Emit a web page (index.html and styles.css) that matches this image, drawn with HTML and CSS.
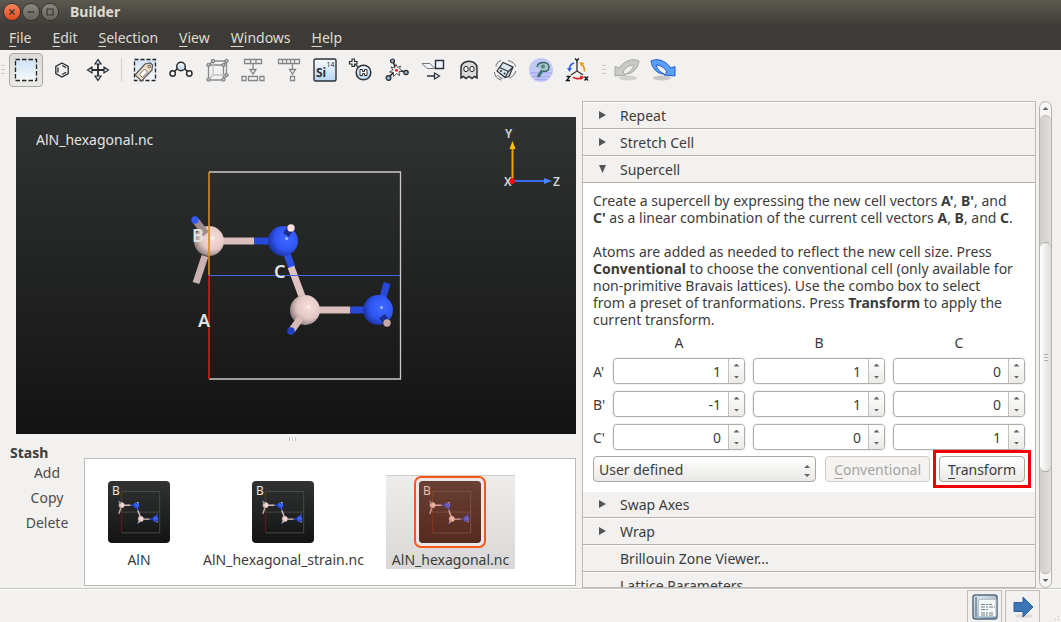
FILE: index.html
```html
<!DOCTYPE html>
<html lang="en">
<head>
    <meta charset="UTF-8">
    <meta name="viewport" content="width=device-width, initial-scale=1.0">
    <title>Builder</title>
    <link rel="stylesheet" href="styles.css">
</head>
<body>

<!-- shared drawings -->
<svg class="defs" width="0" height="0" aria-hidden="true">
    <defs>
        <radialGradient id="al" cx="0.62" cy="0.4" r="0.65">
            <stop offset="0" stop-color="#fff"/>
            <stop offset="0.12" stop-color="#f4d9d7"/>
            <stop offset="0.6" stop-color="#e2c8c6"/>
            <stop offset="1" stop-color="#8d7c7a"/>
        </radialGradient>
        <radialGradient id="n" cx="0.62" cy="0.42" r="0.65">
            <stop offset="0" stop-color="#e8eeff"/>
            <stop offset="0.1" stop-color="#3d66ff"/>
            <stop offset="0.6" stop-color="#2f55f2"/>
            <stop offset="1" stop-color="#1a2f99"/>
        </radialGradient>
        <linearGradient id="sky" x1="0" y1="0" x2="0" y2="1">
            <stop offset="0" stop-color="#cfe2f5"/>
            <stop offset="1" stop-color="#f6f9fc"/>
        </linearGradient>
        <linearGradient id="sky2" x1="0" y1="0" x2="0" y2="1">
            <stop offset="0" stop-color="#fafcfe"/>
            <stop offset="1" stop-color="#b5d3f1"/>
        </linearGradient>
        <g id="atoms" fill="none" stroke-width="7">
            <path d="M193 124H238" stroke="#dcbfbd"/>
            <path d="M238 124H256" stroke="#2848d8"/>
            <path d="M189 139L180 166" stroke="#cbb1af"/>
            <path d="M271 137L276 151" stroke="#2c4fe6"/>
            <path d="M275 150L287 182" stroke="#e0c4c2"/>
            <path d="M289 193H334" stroke="#dcbfbd"/>
            <path d="M334 193H350" stroke="#2848d8"/>
            <path d="M366 184L371 166" stroke="#2848d8"/>
            <circle cx="193" cy="124" r="15" fill="url(#al)" stroke="none"/>
            <path d="M190 117L180 104" stroke="#a08c8a"/>
            <circle cx="179" cy="103" r="3.7" fill="#3457f0" stroke="none"/>
            <circle cx="267" cy="124" r="15" fill="url(#n)" stroke="none"/>
            <circle cx="289" cy="193" r="15" fill="url(#al)" stroke="none"/>
            <circle cx="362" cy="193" r="15" fill="url(#n)" stroke="none"/>
            <path d="M270 118L274 112" stroke="#1c2f8f"/>
            <circle cx="275" cy="111" r="3.7" fill="#fbe0de" stroke="none"/>
            <path d="M286 199L276 213" stroke="#d6bab8"/>
            <circle cx="275" cy="214" r="3.7" fill="#2440c4" stroke="none"/>
            <path d="M366 199L370 205" stroke="#1c2f8f"/>
            <circle cx="371" cy="206" r="3.7" fill="#c4a8a6" stroke="none"/>
        </g>
        <g id="thumb">
            <g transform="translate(-25.1 -0.5) scale(0.2)">
                <path d="M193 55H384V262H193M193 158H384" fill="none" stroke="#464948" stroke-width="5"/>
                <path d="M193 158V262" stroke="#5a1c18" stroke-width="6"/>
                <path d="M193 55V158" stroke="#4d3d22" stroke-width="6"/>
                <use href="#atoms"/>
            </g>
            <text x="4" y="14" font-size="12" fill="#e6e6e6">B</text>
        </g>
    </defs>
</svg>

<header class="titlebar">
    <button class="win-button close" aria-label="Close"><svg viewBox="0 0 16 16"><path d="M5.5 5.5l5 5M10.5 5.5l-5 5"/></svg></button>
    <button class="win-button" aria-label="Minimize"><svg viewBox="0 0 16 16"><path d="M4.5 8h7"/></svg></button>
    <button class="win-button" aria-label="Maximize"><svg viewBox="0 0 16 16"><path d="M5 5h6v6H5z"/></svg></button>
    <h1>Builder</h1>
</header>

<nav class="menubar">
    <button><u>F</u>ile</button>
    <button><u>E</u>dit</button>
    <button><u>S</u>election</button>
    <button><u>V</u>iew</button>
    <button><u>W</u>indows</button>
    <button><u>H</u>elp</button>
</nav>

<div class="toolbar">
    <span class="handle"></span>
    <button class="tool pressed" aria-label="Select">
        <svg viewBox="0 0 24 24"><rect x="1.5" y="1.5" width="21" height="21" fill="url(#sky)" stroke="#222" stroke-width="1.3" stroke-dasharray="4.5 2"/></svg>
    </button>
    <button class="tool" aria-label="Molecule">
        <svg viewBox="0 0 24 24" fill="none" stroke="#2b2b2b" stroke-width="1.3"><path d="M12 5l6.2 3.5v7L12 19l-6.2-3.5v-7z"/><path d="M8 9.5v5M12.3 7.5l3.8 2.2M12.3 16.5l3.8-2.2"/></svg>
    </button>
    <button class="tool" aria-label="Move">
        <svg viewBox="0 0 24 24" fill="#cfe0f0" stroke="#2b2b2b" stroke-width="1.2"><path d="M12 5v14M5 12h14" stroke-width="1.8"/><path d="M12 1.5l3 4.5H9zM12 22.500l3-4.500H9zM1.500 12l4.500-3v6zM22.500 12l-4.500-3v6z"/></svg>
    </button>
    <span class="divider"></span>
    <button class="tool" aria-label="Tags">
        <svg viewBox="0 0 24 24"><rect x="1.500" y="1.500" width="21" height="21" fill="url(#sky)" stroke="#222" stroke-width="1.300" stroke-dasharray="4 2"/><path d="M2 17L12 6l5.500-1 2 2-.5 5L8.500 23z" fill="#f1dcc2" stroke="#555" stroke-width="1.200"/><path d="M6.500 16.500l5-5.500 3 3-5 5.500z" fill="#fff" stroke="#777"/><circle cx="16.300" cy="8.500" r="1.300" fill="#fff" stroke="#444"/></svg>
    </button>
    <button class="tool" aria-label="Bonds">
        <svg viewBox="0 0 24 24" stroke="#2b2b2b" stroke-width="1.500"><path d="M4 15l5-5M20 15l-5-5"/><circle cx="12" cy="8.500" r="4.300" fill="url(#sky2)"/><circle cx="3.700" cy="15.500" r="2.700" fill="#f8f8f8"/><circle cx="20.300" cy="15.500" r="2.700" fill="#f8f8f8"/></svg>
    </button>
    <button class="tool" aria-label="Bulk">
        <svg viewBox="0 0 24 24" fill="none" stroke="#8a8a8a" stroke-width="1.300"><path d="M3.500 7h15v15h-15zM8 3h13.500v14M3.500 7L8 3M18.500 7L21.500 3M18.500 22l3-5"/><path d="M8 3v14h13M3.500 22L8 17" stroke="#c4c4c4"/><g fill="#bbb" stroke="#777" stroke-width="1"><circle cx="3.500" cy="7" r="1.700"/><circle cx="18.500" cy="7" r="1.700"/><circle cx="8" cy="3" r="1.700"/><circle cx="21.500" cy="3" r="1.700"/><circle cx="3.500" cy="21.500" r="1.700"/><circle cx="18.500" cy="21.500" r="1.700"/><circle cx="21.500" cy="17" r="1.700"/></g></svg>
    </button>
    <button class="tool" aria-label="Split">
        <svg viewBox="0 0 24 24" fill="#f7f7f7" stroke="#858585" stroke-width="1.300"><path d="M3.500 1.500h17v4h-17zM9.500 1.500v4M15 1.500v4M12 5.500v6M9 11.500h6l-3 4.500zM1 18.500h4v4H1zM7.500 18.500h9v4h-9zM19 18.500h4v4h-4z"/></svg>
    </button>
    <button class="tool" aria-label="Reduce">
        <svg viewBox="0 0 24 24" fill="#f7f7f7" stroke="#858585" stroke-width="1.300"><path d="M1.500 1.500h21v4h-21zM5.500 1.500v4M9.500 1.500v4M13.500 1.500v4M17.500 1.500v4M15.500 5.500v6M12.500 11.500h6l-3 4.500zM13.500 18.500h4v4h-4z"/></svg>
    </button>
    <button class="tool" aria-label="Periodic table">
        <svg viewBox="0 0 24 24"><rect x="1" y="1" width="22" height="22" rx="1.500" fill="url(#sky2)" stroke="#2b3138" stroke-width="1.400"/><text x="3" y="19" font-size="12" font-weight="bold" fill="#2b3138">Si</text><text x="13.500" y="9" font-size="7" fill="#2b3138">14</text></svg>
    </button>
    <button class="tool" aria-label="Add hydrogen">
        <svg viewBox="0 0 24 24"><path d="M6 6l4 4" stroke="#444" stroke-width="1.500"/><path d="M3 1h2.500v2.500H8V6H5.500v2.500H3V6H.5V3.500H3z" fill="#fff" stroke="#2b2b2b" stroke-width="1.200"/><circle cx="14.500" cy="14.500" r="7.300" fill="url(#sky2)" stroke="#2b3138" stroke-width="1.500"/><path d="M11 11.500h2.500v2h2v-2H18v6h-2.500v-2h-2v2H11z" fill="#fff" stroke="#2b2b2b"/></svg>
    </button>
    <button class="tool" aria-label="Excite">
        <svg viewBox="0 0 24 24" stroke="#2b2b2b"><path d="M11 12L8 3M11 12l10 2M11 12L4 19" stroke-width="1.600"/><path d="M11 6.500l1.500 3 3-1.500-1 3 3 2-3.500.5.5 4-3-2-3 3v-4l-4-.5 3.500-2-2-3 3.500 1z" fill="#fff" stroke-width=".8"/><circle cx="11.500" cy="12.300" r="1.500" fill="#e31b1b" stroke="none"/><g fill="#89acd0" stroke-width="1.200"><circle cx="7.500" cy="3" r="2"/><circle cx="21" cy="14.500" r="2.200"/><circle cx="3.500" cy="20" r="2.400"/></g></svg>
    </button>
    <button class="tool" aria-label="Transform cell">
        <svg viewBox="0 0 24 24" fill="#eef4fa" stroke="#2b3138" stroke-width="1.400"><path d="M1 5.500h8l5 5H6z" stroke="#777" stroke-width="1"/><path d="M14.500 2.500h8v8h-8zM6 18h11"/><path d="M13.500 15l5 3-5 3z" stroke-width="1.200"/></svg>
    </button>
    <button class="tool" aria-label="Ghost">
        <svg viewBox="0 0 24 24"><path d="M4 20V10c0-9 16-9 16 0v10l-2.500-1.500L15 20.500l-3-2-3 2-2.500-2z" fill="#dadada" stroke="#2f2f2f" stroke-width="1.500"/><ellipse cx="9" cy="11" rx="2.200" ry="2.700" fill="#fff" stroke="#222"/><ellipse cx="15" cy="11" rx="2.200" ry="2.700" fill="#fff" stroke="#222"/></svg>
    </button>
    <button class="tool" aria-label="Rattle">
        <svg viewBox="0 0 24 24" fill="none" stroke="#2b3138" stroke-width="1.200"><path d="M4 13l6-8.500 10 4.500-4 9.500-4 1z" fill="#d9e6ef"/><path d="M6.500 9.500l9 4-3.500 6M15.500 13.500L20 9"/><path d="M3 8.500c0-3 2-5 5-6M1.500 14c0 4 3 7 7 8M15 2.500c4 1 7 3 7.500 6M22.500 13c0 3-3 6-6 7M4.500 17c1 2 3 3 5 3.500" stroke="#555" stroke-width=".9"/><circle cx="8" cy="13" r=".9" fill="#222" stroke="none"/><circle cx="11.500" cy="15.500" r=".9" fill="#222" stroke="none"/></svg>
    </button>
    <button class="tool" aria-label="Probe">
        <svg viewBox="0 0 24 24"><circle cx="12" cy="12" r="12" fill="#c3c9f7"/><path d="M1 15h22M3 18.500h18M6 21.500h12" stroke="#a5acee" stroke-width="1.500"/><path d="M9 19l5-8" stroke="#3e7570" stroke-width="3"/><path d="M8 9c1-6 12-6 12 0 0 4-3 5-6 4" fill="#a9c4c8" stroke="#36666a" stroke-width="1.400"/><circle cx="14" cy="8.500" r="2" fill="#4f8784"/></svg>
    </button>
    <button class="tool" aria-label="Rotate axes">
        <svg viewBox="0 0 24 24" fill="none" stroke-width="1.700"><path d="M12 5v8l-6 4M12 13l6 4" stroke="#333" stroke-width="1.300"/><path d="M9 5C6 6 4.500 8 4.500 11" stroke="#2f62e0"/><path d="M2 10h5l-2.500 4z" fill="#2f62e0"/><path d="M19.500 13.500c0-3-1-6-3-7.500" stroke="#f09a1a"/><path d="M14.500 4l5 1-3.500 3.500z" fill="#f09a1a"/><path d="M8 19c2 2 6 2 8 1" stroke="#e31b1b"/><path d="M15 17.500l4.500 1.500-4 3z" fill="#e31b1b"/><path d="M10 .5l2 2 2-2M12 2v3M1.500 18.500H5l-3.500 4H5M19.500 18.500l3.500 4M23 18.500l-3.500 4" stroke="#111" stroke-width="1.300"/></svg>
    </button>
    <span class="handle second"></span>
    <button class="tool" aria-label="Undo" disabled>
        <svg viewBox="0 0 24 24"><ellipse cx="13" cy="20" rx="9" ry="2.500" fill="#d2d1cf"/><path d="M24 3C18 0 10 2 4 10L0 8.500V18l11-1-3-3c3-5 7-7 11-7-1 4-4 7-8 9 7 0 12-6 13-13z" fill="#c9c9c7" stroke="#a6a6a4"/></svg>
    </button>
    <button class="tool" aria-label="Redo">
        <svg viewBox="0 0 24 24"><ellipse cx="11" cy="20" rx="9" ry="2.500" fill="#c8c7c5"/><path d="M0 3c6-3 14-1 20 7l4-1.500V18l-11-1 3-3C13 9 9 7 5 7c1 4 4 7 8 9C6 16 1 10 0 3z" fill="#5aa0f5" stroke="#2159d6"/></svg>
    </button>
</div>

<main class="workspace">
    <section class="left">
        <div class="viewer">
            <svg viewBox="0 0 560 317" preserveAspectRatio="xMidYMid meet">
                <text x="20" y="28" font-size="14" fill="#e4e4e4">AlN_hexagonal.nc</text>
                <path d="M193 55H384.500V262H193" fill="none" stroke="#c9c9c7" stroke-width="1.300"/>
                <use href="#atoms"/>
                <path d="M193 55V158" stroke="#d98a20" stroke-width="1.600"/>
                <path d="M193 158V262" stroke="#d01616" stroke-width="1.800"/>
                <path d="M193 158.500H384" stroke="#4468e8"/>
                <g font-size="18" font-weight="600" fill="#dfe2e0">
                    <text x="176" y="125">B</text>
                    <text x="258" y="161">C</text>
                    <text x="182" y="210">A</text>
                </g>
                <g class="axes">
                    <path d="M496.500 64V32" stroke="#f0a000" stroke-width="2"/>
                    <path d="M493.500 32l3-8 3 8z" fill="#ffc000"/>
                    <path d="M497 64H528" stroke="#3c6cf0" stroke-width="2"/>
                    <path d="M528 61l8 3-8 3z" fill="#4a86ff"/>
                    <circle cx="496" cy="64" r="3" fill="#f01010"/>
                    <g font-size="12" font-weight="600" fill="#d5d8d6">
                        <text x="489" y="21">Y</text>
                        <text x="488" y="69">X</text>
                        <text x="537" y="69">Z</text>
                    </g>
                </g>
            </svg>
        </div>
        <div class="splitter"><span></span></div>
        <div class="stash">
            <div class="stash-actions">
                <h2>Stash</h2>
                <button>Add</button>
                <button>Copy</button>
                <button>Delete</button>
            </div>
            <ul class="stash-list">
                <li class="stash-item">
                    <span class="frame"><svg viewBox="0 0 62 62"><use href="#thumb"/></svg></span>
                    <span>AlN</span>
                </li>
                <li class="stash-item">
                    <span class="frame"><svg viewBox="0 0 62 62"><use href="#thumb"/></svg></span>
                    <span>AlN_hexagonal_strain.nc</span>
                </li>
                <li class="stash-item selected">
                    <span class="frame"><svg viewBox="0 0 62 62"><use href="#thumb"/><rect width="62" height="62" fill="#f0603a" opacity="0.3"/></svg></span>
                    <span>AlN_hexagonal.nc</span>
                </li>
            </ul>
        </div>
    </section>

    <aside class="side">
        <div class="panel">
            <button class="row"><span class="tri"></span>Repeat</button>
            <button class="row"><span class="tri"></span>Stretch Cell</button>
            <button class="row" aria-expanded="true"><span class="tri open"></span>Supercell</button>
            <div class="supercell">
                <p>Create a supercell by expressing the new cell vectors <b>A'</b>, <b>B'</b>, and<br>
                <b>C'</b> as a linear combination of the current cell vectors <b>A</b>, <b>B</b>, and <b>C</b>.</p>
                <p>Atoms are added as needed to reflect the new cell size. Press<br>
                <b>Conventional</b> to choose the conventional cell (only available for<br>
                non-primitive Bravais lattices). Use the combo box to select<br>
                from a preset of tranformations. Press <b>Transform</b> to apply the<br>
                current transform.</p>
                <div class="matrix">
                    <span></span><span class="col">A</span><span class="col">B</span><span class="col">C</span>
                    <label for="aa">A'</label>
                    <div class="spin"><input id="aa" value="1"><div class="steps"><button aria-label="Up"></button><button aria-label="Down"></button></div></div>
                    <div class="spin"><input aria-label="A' B" value="1"><div class="steps"><button aria-label="Up"></button><button aria-label="Down"></button></div></div>
                    <div class="spin"><input aria-label="A' C" value="0"><div class="steps"><button aria-label="Up"></button><button aria-label="Down"></button></div></div>
                    <label for="ba">B'</label>
                    <div class="spin"><input id="ba" value="-1"><div class="steps"><button aria-label="Up"></button><button aria-label="Down"></button></div></div>
                    <div class="spin"><input aria-label="B' B" value="1"><div class="steps"><button aria-label="Up"></button><button aria-label="Down"></button></div></div>
                    <div class="spin"><input aria-label="B' C" value="0"><div class="steps"><button aria-label="Up"></button><button aria-label="Down"></button></div></div>
                    <label for="ca">C'</label>
                    <div class="spin"><input id="ca" value="0"><div class="steps"><button aria-label="Up"></button><button aria-label="Down"></button></div></div>
                    <div class="spin"><input aria-label="C' B" value="0"><div class="steps"><button aria-label="Up"></button><button aria-label="Down"></button></div></div>
                    <div class="spin"><input aria-label="C' C" value="1"><div class="steps"><button aria-label="Up"></button><button aria-label="Down"></button></div></div>
                </div>
                <div class="actions">
                    <div class="combo">
                        <select aria-label="Preset"><option>User defined</option></select>
                    </div>
                    <button class="push" disabled><u>C</u>onventional</button>
                    <span class="highlight"><button class="push"><u>T</u>ransform</button></span>
                </div>
            </div>
            <button class="row"><span class="tri"></span>Swap Axes</button>
            <button class="row"><span class="tri"></span>Wrap</button>
            <button class="row plain">Brillouin Zone Viewer...</button>
            <button class="row plain">Lattice Parameters...</button>
        </div>
        <div class="scrollbar">
            <button class="scroll-up" aria-label="Scroll up"></button>
            <div class="trough"><div class="scroll-thumb"><span></span></div></div>
            <button class="scroll-down" aria-label="Scroll down"></button>
        </div>
    </aside>
</main>

<footer class="statusbar">
    <button aria-label="Script">
        <svg viewBox="0 0 26 26"><defs><linearGradient id="book" x1="0" y1="0" x2="1" y2="1"><stop offset="0" stop-color="#e8eef2"/><stop offset="1" stop-color="#7f9bb0"/></linearGradient></defs><rect x="1" y="1" width="24" height="24" rx="2.500" fill="url(#book)" stroke="#54697c" stroke-width="1.500"/><path d="M4 3v20" stroke="#8299aa" stroke-width="2"/><path d="M6.500 5.500H24v17H6.500z" fill="#f3f7f8" stroke="#b3c3ce"/><path d="M9 10.500h11M9 13h14M9 15.500h8M9 19h13M9 21h12" stroke="#75828c" stroke-dasharray="4 1 2 1"/></svg>
    </button>
    <button aria-label="Send to">
        <svg viewBox="0 0 26 26"><ellipse cx="14" cy="22" rx="9" ry="2" fill="#dcdbd9"/><path d="M4 8.500h9V3l10 10-10 10v-5.500H4z" fill="#3c74b8" stroke="#2c5c99"/></svg>
    </button>
    <span class="grip"></span>
</footer>

</body>
</html>
```
FILE: styles.css
```css
* {
    box-sizing: border-box;
}

body {
    margin: 0;
    height: 100vh;
    display: flex;
    flex-direction: column;
    overflow: hidden;
    background: #f2f1f0;
    color: #3c3c3c;
    font-family: "Noto Sans", "Open Sans", sans-serif;
    font-size: 14px;
    line-height: 17px;
}

button, input, select {
    font: inherit;
    color: inherit;
    margin: 0;
    padding: 0;
    border: none;
    background: none;
}

h1, h2, p, ul {
    margin: 0;
    padding: 0;
    font-size: 14px;
}

u {
    text-underline-offset: 3px;
    text-decoration-thickness: 1px;
}

.defs {
    position: absolute;
}

/* window frame */
.titlebar {
    display: flex;
    align-items: center;
    gap: 3px;
    height: 24px;
    padding: 0 0 1px 4px;
    background: linear-gradient(#5b584f, #403e39);
    color: #dfdbd2;
}

.titlebar h1 {
    margin-left: 9px;
}

.win-button {
    width: 16px;
    height: 16px;
    border-radius: 50%;
    background: linear-gradient(#8b8880, #66645d);
    box-shadow: 0 0 0 1px #33322e;
}

.win-button.close {
    background: linear-gradient(#f5865f, #df4a1c);
}

.win-button svg {
    display: block;
    fill: none;
    stroke: #35332f;
    stroke-width: 1.2;
}

.menubar {
    display: flex;
    gap: 21px;
    height: 26px;
    padding-left: 9px;
    background: #3c3b37;
    color: #dfdbd2;
}

/* toolbar */
.toolbar {
    display: flex;
    align-items: center;
    gap: 2px;
    height: 42px;
    padding: 0 0 2px 1px;
}

.handle {
    width: 4px;
    height: 11px;
    margin-right: 2px;
    background: repeating-linear-gradient(#cfcdca 0 1px, #f2f1f0 1px 4px);
}

.handle.second {
    margin: 0 2px 0 6px;
}

.tool {
    display: flex;
    align-items: center;
    justify-content: center;
    width: 34px;
    height: 34px;
    border: 1px solid transparent;
    border-radius: 4px;
}

.tool.pressed {
    border-color: #aaa8a3;
    background: linear-gradient(#dddcda, #ebeae8);
}

.tool svg {
    width: 24px;
    height: 24px;
    overflow: visible;
}

.divider {
    width: 1px;
    height: 24px;
    margin: 0 4px;
    background: #d3d1ce;
}

/* workspace */
.workspace {
    flex: 1;
    min-height: 0;
    display: grid;
    grid-template-columns: minmax(0, 1fr) 479px;
}

.left {
    display: flex;
    flex-direction: column;
    min-height: 0;
    padding: 25px 6px 0 0;
}

.viewer {
    flex: 1;
    min-height: 0;
    display: flex;
    margin-left: 16px;
    background: linear-gradient(#303332, #131313);
}

.viewer svg {
    flex: 1;
    min-width: 0;
}

.splitter {
    display: flex;
    align-items: center;
    justify-content: center;
    height: 10px;
    padding-left: 8px;
}

.splitter span {
    width: 7px;
    height: 4px;
    background: repeating-linear-gradient(90deg, #c4c2bf 0 1px, #fff 1px 3px);
}

.stash {
    display: flex;
    height: 144px;
}

.stash-actions {
    display: flex;
    flex-direction: column;
    width: 84px;
    padding-left: 10px;
}

.stash-actions h2 {
    line-height: 17px;
}

.stash-actions button {
    height: 25px;
    padding-bottom: 2px;
    color: #4c4c4c;
}

.stash-list {
    flex: 1;
    display: flex;
    align-items: flex-start;
    gap: 16px;
    margin: 14px 0 2px;
    padding: 16px 12px;
    border: 1px solid #bdb9b4;
    background: #fff;
    list-style: none;
    overflow: hidden;
}

.stash-item {
    display: flex;
    flex-direction: column;
    align-items: center;
    height: 94px;
    padding: 1px 6px 0;
}

.stash-item .frame {
    margin-bottom: 3px;
    padding: 3px;
    border: 2px solid transparent;
    border-radius: 7px;
}

.stash-item svg {
    display: block;
    width: 62px;
    height: 62px;
    border-radius: 4px;
    background: linear-gradient(#303332, #131313);
}

.stash-item.selected {
    background: linear-gradient(#eeedec, #d9d8d6);
    box-shadow: inset 0 1px #d2d0ce;
}

.selected .frame {
    border-color: #f9541c;
    background: #e9e8e7;
}

/* plugin panel */
.side {
    display: flex;
    gap: 3px;
    min-height: 0;
    padding: 9px 9px 0 0;
}

.panel {
    flex: 1;
    overflow: hidden;
    border: 1px solid #bdb9b4;
}

.row {
    display: flex;
    align-items: center;
    width: 100%;
    height: 27px;
    border-bottom: 1px solid #b4b1ad;
    box-shadow: inset 0 1px #fff;
}

.row.plain {
    padding-left: 37px;
}

.tri {
    width: 7px;
    height: 8px;
    margin: 0 14px 0 16px;
    background: #555;
    clip-path: polygon(0 0, 100% 50%, 0 100%);
}

.tri.open {
    clip-path: polygon(0 0, 100% 0, 50% 100%);
}

.supercell {
    padding: 9px 10px;
    background: #fff;
}

.supercell p {
    margin: 0 -6px 17px 0;
}

.supercell p + p {
    margin-bottom: 6px;
}

.matrix {
    display: grid;
    grid-template-columns: 12px repeat(3, minmax(0, 1fr));
    gap: 7px 8px;
    align-items: center;
}

.matrix .col {
    text-align: center;
}

.spin {
    display: flex;
    height: 26px;
    border: 1px solid #b0aca6;
    border-radius: 4px;
    background: #fff;
    box-shadow: 0 0 0 1px #f2f1f0;
    overflow: hidden;
}

.spin input {
    flex: 1;
    min-width: 0;
    padding-right: 7px;
    text-align: right;
}

.steps {
    display: flex;
    flex-direction: column;
    width: 16px;
    border-left: 1px solid #c4c1bc;
    background: linear-gradient(#fff, #ebeae8);
}

.steps button {
    flex: 1;
    display: flex;
    align-items: center;
    justify-content: center;
}

.steps button::before, .scrollbar button::before, .combo::before, .combo::after {
    content: "";
    width: 6px;
    height: 3px;
    background: #666;
    clip-path: polygon(0 100%, 50% 0, 100% 100%);
}

.steps button + button::before, .scrollbar .scroll-down::before, .combo::after {
    clip-path: polygon(0 0, 100% 0, 50% 100%);
}

.actions {
    display: flex;
    gap: 9px;
    margin-top: 6px;
}

.combo {
    position: relative;
    flex: 1;
    min-width: 0;
}

.combo select {
    appearance: none;
    width: 100%;
    height: 26px;
    padding-left: 5px;
    border: 1px solid #aaa6a0;
    border-radius: 4px;
    background: linear-gradient(#fff, #e9e8e6);
}

/* arrows over the select */
.combo::before, .combo::after {
    position: absolute;
    right: 6px;
    top: 9px;
    pointer-events: none;
}

.combo::after {
    top: 18px;
}

.push {
    display: block;
    height: 26px;
    padding: 0 8px;
    border: 1px solid #aaa6a0;
    border-radius: 4px;
    background: linear-gradient(#fff, #e9e8e6);
}

.push:disabled {
    border-color: #cfccc8;
    background: #f4f3f2;
    color: #a5a4a2;
}

.highlight {
    outline: 3px solid #f40000;
    outline-offset: 3px;
}

.scrollbar {
    display: flex;
    flex-direction: column;
    width: 13px;
    border: 1px solid #b6b2ad;
    border-radius: 7px;
    background: #f6f5f4;
    overflow: hidden;
}

.scrollbar button {
    display: flex;
    align-items: center;
    justify-content: center;
    height: 13px;
}

.trough {
    flex: 1;
    display: flex;
    flex-direction: column;
    padding: 126px 0 101px;
    border: 1px solid #b6b2ad;
    border-width: 1px 0;
    border-radius: 6px;
    background: linear-gradient(90deg, #d0cfcd, #dfdedc);
}

.scroll-thumb {
    flex: 1;
    display: flex;
    align-items: center;
    justify-content: center;
    border: 1px solid #aaa6a0;
    border-width: 1px 0;
    border-radius: 6px;
    background: linear-gradient(90deg, #fff, #dddcda);
}

.scroll-thumb span {
    width: 4px;
    height: 7px;
    background: repeating-linear-gradient(#aaa 0 1px, #f2f1f0 1px 3px);
}

/* bottom bar */
.statusbar {
    display: flex;
    justify-content: flex-end;
    gap: 3px;
    height: 34px;
    padding: 1px 0 0;
    border-top: 1px solid #c9c7c4;
    box-shadow: inset 0 1px #fff;
}

.statusbar button {
    display: flex;
    justify-content: center;
    width: 35px;
    padding-top: 3px;
    border: 1px solid #c0bdb9;
    border-bottom: none;
}

.statusbar svg {
    width: 26px;
    height: 26px;
}

.grip {
    align-self: flex-end;
    width: 10px;
    height: 10px;
    margin-left: 8px;
    background: radial-gradient(#bbb9b6 1px, transparent 1px) 0 0 / 3px 3px;
    clip-path: polygon(100% 0, 100% 100%, 0 100%);
}
```
